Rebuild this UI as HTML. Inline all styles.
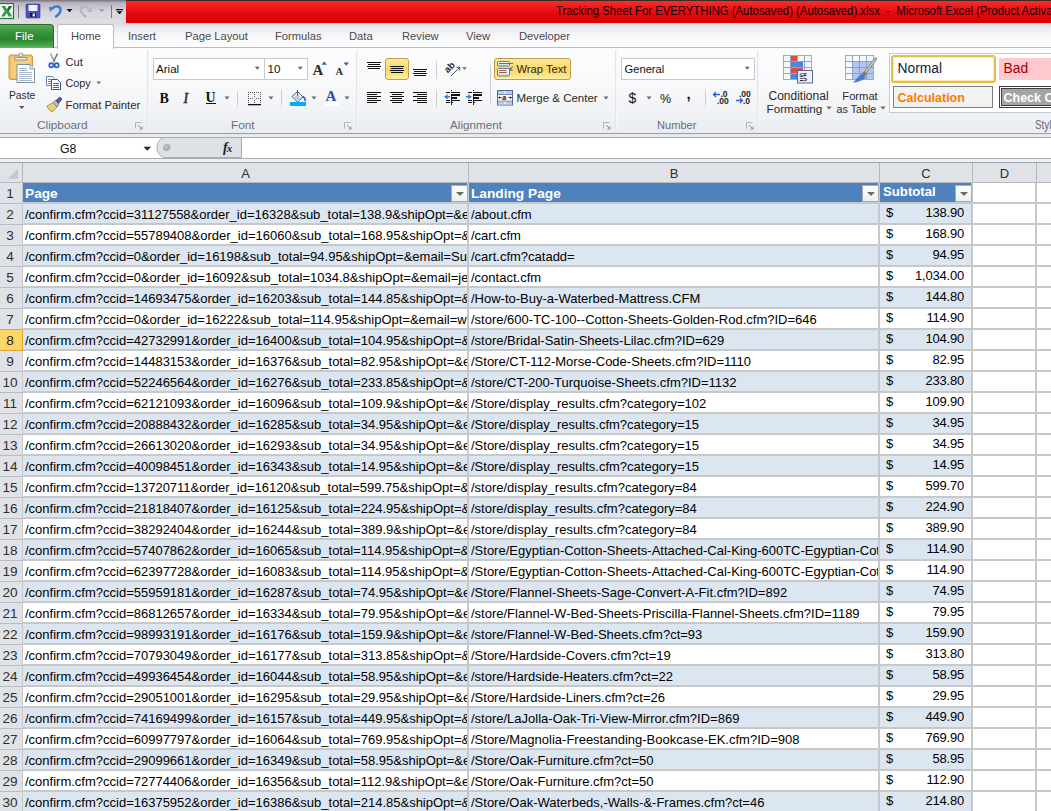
<!DOCTYPE html>
<html><head><meta charset="utf-8">
<style>
*{box-sizing:border-box;margin:0;padding:0}
html,body{width:1051px;height:811px;overflow:hidden;background:#fff;font-family:"Liberation Sans",sans-serif}
.a{position:absolute}
/* title bar */
#title{position:absolute;left:0;top:0;width:1051px;height:24px;background:linear-gradient(#77727e,#b9b5c0 12%,#d6d3dc 45%,#e2e0e6)}
#red{position:absolute;left:126px;top:1px;width:925px;height:22px;background:linear-gradient(#ff2a2a,#e00808 60%,#d80000)}
#topline{position:absolute;left:126px;top:0;width:925px;height:1px;background:#3a2a2a}
#ttext{position:absolute;left:556px;top:4px;font-size:12.4px;color:#140000;white-space:nowrap;line-height:15px;transform:scaleX(0.915);transform-origin:0 0}
/* tab row */
#tabs{position:absolute;left:0;top:23px;width:1051px;height:25px;background:linear-gradient(#d9d6e0,#eceaf1 20%,#f8f8fb 55%,#fdfdfe)}
.tab{position:absolute;top:29px;font-size:11.2px;color:#4a4a4a;line-height:14px;white-space:nowrap}
#file{position:absolute;left:0;top:24px;width:54px;height:24px;background:linear-gradient(#5aaa5a,#3a963c 30%,#2a862e 60%,#47a448 88%,#66bb66);border-radius:0 4px 0 0;border:1px solid #2a6a2c;border-left:none;border-bottom:none}
#filet{position:absolute;left:15px;top:29px;color:#fff;font-size:11.5px;line-height:14px}
#home{position:absolute;left:57px;top:24px;width:57px;height:25px;background:#fff;border:1px solid #b9bdc4;border-bottom:none;border-radius:3px 3px 0 0}
/* ribbon */
#ribbon{position:absolute;left:0;top:47px;width:1051px;height:87px;background:linear-gradient(#fdfdfe,#f6f7f9 55%,#e9ecf0);border-top:1px solid #b8bcc2}
.sep{position:absolute;top:50px;width:2px;height:80px;background:linear-gradient(90deg,#d9dce1,#ffffff)}
.glab{position:absolute;top:118px;font-size:11.5px;color:#6a6e7a;line-height:14px;white-space:nowrap}
.rt{position:absolute;font-size:11.3px;color:#2a2a2a;line-height:14px;white-space:nowrap}
#rbot{position:absolute;left:0;top:133px;width:1051px;height:1px;background:#9a9ea4}
#rbot2{position:absolute;left:0;top:134px;width:1051px;height:3px;background:#e7e9ec}
/* formula bar */
#fbar{position:absolute;left:0;top:137px;width:1051px;height:22px;background:#fff;border-top:1px solid #a9adb3;border-bottom:1px solid #a9adb3}
#fbot{position:absolute;left:0;top:159px;width:1051px;height:3px;background:#eef1f6}
/* grid */
#grid{position:absolute;left:0;top:162px;width:1051px;height:649px;background:#c8c8c8}
#colhdr{position:absolute;left:0;top:162px;width:1051px;height:21px;background:#dfe3e8;border-top:1px solid #9ea3a9;border-bottom:1px solid #b6bac0}
.ch{position:absolute;top:163px;height:19px;line-height:21px;text-align:center;font-size:13px;color:#2f2f2f;background:#dfe3e8}
.rh{position:absolute;left:0;width:22px;height:21px;line-height:21px;text-align:center;padding-right:2px;font-size:13.6px;color:#2f2f2f;background:#dfe3e8;border-bottom:1px solid #b9bdc3}
.rh.sel{background:#fdd766;color:#222;border-bottom:1px solid #e0a434;box-shadow:0 -1px 0 #e0a434, 1px 0 0 #e0a434}
.c{position:absolute;height:19px}
.w{background:#fff}
.b{background:#dce6f1}
.hdr{background:#4f81bd}
.t{position:absolute;height:21px;line-height:21px;font-size:13px;color:#000;white-space:nowrap;overflow:hidden}
.th{color:#fff;font-weight:bold;font-size:13.7px;line-height:21px}
.num{text-align:right;letter-spacing:-0.2px}
.dd{position:absolute;width:17px;height:17px;background:linear-gradient(#ffffff,#eceef1);border:1px solid #a8acb2}
.dd i{position:absolute;left:3.5px;top:6px;width:0;height:0;border-left:4.5px solid transparent;border-right:4.5px solid transparent;border-top:4.5px solid #6a6a6a}
.combo{position:absolute;height:22px;background:#fff;border:1px solid #c6cad0}
.ser{font-family:"Liberation Serif",serif;line-height:1}
.vsep{position:absolute;width:1px;background:linear-gradient(rgba(200,204,210,0),#c8ccd2 20%,#c8ccd2 80%,rgba(200,204,210,0))}
.hl{position:absolute;border:1px solid #c29b4e;border-radius:3px;background:linear-gradient(#fde89a,#fbd868 50%,#fde27e 80%,#fff2b0)}
</style></head><body>
<div id="title"></div>
<div id="topline"></div>
<div id="red"></div>
<div id="ttext">Tracking Sheet For EVERYTHING (Autosaved) (Autosaved).xlsx&nbsp; -&nbsp; Microsoft Excel (Product Activation Failed)</div>

<div id="tabs"></div>
<div id="ribbon"></div>
<div id="file"></div><div id="filet">File</div>
<div id="home"></div>
<div class="tab" style="left:71px">Home</div>
<div class="tab" style="left:128px">Insert</div>
<div class="tab" style="left:185px">Page Layout</div>
<div class="tab" style="left:275px">Formulas</div>
<div class="tab" style="left:349px">Data</div>
<div class="tab" style="left:402px">Review</div>
<div class="tab" style="left:466px">View</div>
<div class="tab" style="left:519px">Developer</div>

<!-- quick access toolbar -->
<svg class="a" style="left:0;top:0" width="126" height="24" viewBox="0 0 126 24">
  <!-- excel icon -->
  <rect x="-1" y="3.5" width="14.5" height="15" fill="#f4f8f4" stroke="#1f7a3a" stroke-width="1.2"/>
  <path d="M1.5 6 L5 6 L7 9.5 L9 6 L12 6 L8.8 11 L12.2 16.5 L8.6 16.5 L6.6 13 L4.5 16.5 L1.2 16.5 L4.8 11 Z" fill="#2e9a3e"/>
  <path d="M7 9.5 L9 6 L12 6 L8.8 11 Z" fill="#1c6e30"/>
  <rect x="18" y="5" width="1" height="13" fill="#7c7a80"/>
  <!-- save -->
  <rect x="26" y="4" width="14" height="14" rx="1" fill="#4d4fc2" stroke="#3a3aa0" stroke-width="0.6"/>
  <rect x="28.5" y="5" width="9" height="6" fill="#eef0f8"/>
  <rect x="30" y="13" width="6" height="4" fill="#1b1b3a"/>
  <rect x="32.5" y="13.5" width="2.5" height="3" fill="#d8d8e8"/>
  <!-- undo -->
  <path d="M52 8.5 C 56 5, 61 6, 60.5 10.5 C 60 14, 57.5 15.5, 56 16.5" fill="none" stroke="#3a7ad8" stroke-width="2.4" stroke-linecap="round"/>
  <path d="M49 7 L54.5 7 L50 12 Z" fill="#3a7ad8"/>
  <path d="M66.5 9 L72.5 9 L69.5 12.2 Z" fill="#111"/>
  <!-- redo -->
  <path d="M89 8.5 C 85 5, 80.5 6, 81 10.5 C 81.5 14, 84 15.5, 85.5 16.5" fill="none" stroke="#b8b8bc" stroke-width="2.4" stroke-linecap="round"/>
  <path d="M92 7.5 L92 12 L86.5 12 Z" fill="#b8b8bc"/>
  <path d="M99 9.2 L104.5 9.2 L101.7 12 Z" fill="#9a9a9e"/>
  <rect x="111" y="5" width="1" height="13" fill="#7c7a80"/>
  <rect x="116" y="9" width="7" height="1.3" fill="#111"/>
  <path d="M116.5 11.2 L122.5 11.2 L119.5 14.2 Z" fill="#111"/>
</svg>

<!-- group separators -->
<div class="sep" style="left:147px"></div>
<div class="sep" style="left:356px"></div>
<div class="sep" style="left:615px"></div>
<div class="sep" style="left:757px"></div>

<!-- Clipboard group -->
<svg class="a" style="left:6px;top:51px" width="32" height="34" viewBox="0 0 32 34">
  <rect x="3" y="4" width="23.5" height="24.5" rx="2" fill="#f3c161" stroke="#c8984a" stroke-width="1"/>
  <rect x="5" y="6" width="19.5" height="20.5" rx="1" fill="#f7cd78"/>
  <path d="M8.5 6.5 L21 6.5 L21 9 L8.5 9 Z" fill="#e8ecf0" stroke="#7a8896" stroke-width="0.8"/>
  <circle cx="14.8" cy="4" r="2" fill="#e8ecf0" stroke="#7a8896" stroke-width="0.8"/>
  <path d="M11 13.5 L24 13.5 L28.5 18 L28.5 31.5 L11 31.5 Z" fill="#fdfdfd" stroke="#7c8fa3" stroke-width="1"/>
  <path d="M24 13.5 L24 18 L28.5 18" fill="#e2e8ee" stroke="#7c8fa3" stroke-width="0.8"/>
  <g fill="#a9b8c8" shape-rendering="crispEdges"><rect x="13" y="17" width="8" height="1"/><rect x="13" y="19" width="8" height="1"/><rect x="13" y="21" width="13" height="1"/><rect x="13" y="23" width="13" height="1"/><rect x="13" y="25" width="13" height="1"/><rect x="13" y="27" width="13" height="1"/><rect x="13" y="29" width="13" height="1"/></g>
</svg>
<div class="rt" style="left:9px;top:89.1px;font-size:10.3px">Paste</div>
<svg class="a" style="left:18px;top:105px" width="8" height="5"><path d="M1 1 L6.5 1 L3.75 4 Z" fill="#555"/></svg>

<svg class="a" style="left:47px;top:53px" width="14" height="16" viewBox="0 0 14 16">
  <path d="M3.5 0.5 L7.5 9" stroke="#9a9ca2" stroke-width="1.5"/>
  <path d="M10.5 0.5 L6.5 9" stroke="#6d7077" stroke-width="1.5"/>
  <circle cx="4.3" cy="12.3" r="2.1" fill="#dfe8f8" stroke="#2f5fc8" stroke-width="1.7"/>
  <circle cx="9.7" cy="12.3" r="2.1" fill="#dfe8f8" stroke="#2f5fc8" stroke-width="1.7"/>
</svg>
<div class="rt" style="left:65.5px;top:55.3px;font-size:11.1px">Cut</div>

<svg class="a" style="left:45px;top:75px" width="17" height="15" viewBox="0 0 17 15">
  <path d="M1.5 1.5 L7.5 1.5 L9.5 3.5 L9.5 10.5 L1.5 10.5 Z" fill="#fafcff" stroke="#6a84ac" stroke-width="1"/>
  <g fill="#5a8ad8" shape-rendering="crispEdges"><rect x="3" y="4" width="5" height="1"/><rect x="3" y="6" width="5" height="1"/><rect x="3" y="8" width="4" height="1"/></g>
  <path d="M6.5 4.5 L12.5 4.5 L15.5 7.5 L15.5 14.5 L6.5 14.5 Z" fill="#fafcff" stroke="#34549a" stroke-width="1"/>
  <g fill="#2f6ad0" shape-rendering="crispEdges"><rect x="8" y="8" width="6" height="1"/><rect x="8" y="10" width="6" height="1"/><rect x="8" y="12" width="6" height="1"/></g>
</svg>
<div class="rt" style="left:65.5px;top:76px;font-size:10.8px">Copy</div>
<svg class="a" style="left:96px;top:81px" width="6" height="4"><path d="M0.5 0.5 L5 0.5 L2.75 3.2 Z" fill="#666"/></svg>

<svg class="a" style="left:45px;top:96px" width="18" height="17" viewBox="0 0 18 17">
  <path d="M2 10 L8.5 6.5 L12 11 L7.5 16 C 5 15, 3 13, 2 10 Z" fill="#e8d270" stroke="#a08a30" stroke-width="0.8"/>
  <path d="M8 6.5 L11 4 L14 8 L12 11 Z" fill="#b8bcc8" stroke="#6a6e80" stroke-width="0.7"/>
  <path d="M11 4.5 L15 1 L17 3 L13.5 7.5 Z" fill="#5b4fc0" stroke="#3a2f90" stroke-width="0.7"/>
</svg>
<div class="rt" style="left:65.5px;top:98.3px;font-size:11.3px">Format Painter</div>

<div class="glab" style="left:37px;top:118px;font-size:11.8px">Clipboard</div>
<svg class="a launch" style="left:135px;top:122px" width="8" height="8" viewBox="0 0 8 8"><path d="M0.5 6.5 L0.5 0.5 L6.5 0.5" fill="none" stroke="#b0b4bc" stroke-width="1"/><path d="M3 3 L6.5 6.5 M7 4.5 L7 7 L4.5 7" fill="none" stroke="#8a8e98" stroke-width="1"/></svg>

<!-- Font group -->
<div class="combo" style="left:153px;top:58px;width:112px"></div>
<div class="combo" style="left:264px;top:58px;width:44px"></div>
<div class="rt" style="left:156px;top:62px;font-size:11.6px;color:#111">Arial</div>
<div class="rt" style="left:267.5px;top:62px;font-size:11.6px;color:#111">10</div>
<svg class="a" style="left:254px;top:66px" width="7" height="5"><path d="M0.8 0.8 L5.8 0.8 L3.3 3.8 Z" fill="#666"/></svg>
<svg class="a" style="left:297px;top:66px" width="7" height="5"><path d="M0.8 0.8 L5.8 0.8 L3.3 3.8 Z" fill="#666"/></svg>
<div class="a ser" style="left:312.5px;top:63px;font-size:15px;font-weight:bold;color:#2b2b2b">A</div>
<svg class="a" style="left:321px;top:61px" width="7" height="5"><path d="M0.5 3.8 L6 3.8 L3.25 0.5 Z" fill="#2f5fb8"/></svg>
<div class="a ser" style="left:335.5px;top:66.5px;font-size:10.5px;font-weight:bold;color:#2b2b2b">A</div>
<svg class="a" style="left:342.5px;top:62px" width="7" height="5"><path d="M0.5 0.5 L6 0.5 L3.25 3.8 Z" fill="#2f5fb8"/></svg>

<div class="a ser" style="left:159.5px;top:91.5px;font-size:14px;font-weight:bold;color:#111">B</div>
<div class="a ser" style="left:183.5px;top:91.5px;font-size:14px;font-style:italic;color:#222;-webkit-text-stroke:0.4px #222">I</div>
<div class="a ser" style="left:205.5px;top:91px;font-size:14px;font-weight:bold;color:#111">U</div>
<div class="a" style="left:206px;top:103px;width:10px;height:1px;background:#111"></div>
<svg class="a" style="left:224px;top:95.5px" width="7" height="5"><path d="M0.5 0.5 L5.5 0.5 L3 3.5 Z" fill="#666"/></svg>
<div class="vsep" style="left:237px;top:89px;height:19px"></div>
<svg class="a" style="left:247px;top:91px" width="15" height="15" viewBox="0 0 15 15">
  <g fill="#555"><rect x="1" y="1" width="1" height="1"/><rect x="3" y="1" width="1" height="1"/><rect x="5" y="1" width="1" height="1"/><rect x="7" y="1" width="1" height="1"/><rect x="9" y="1" width="1" height="1"/><rect x="11" y="1" width="1" height="1"/><rect x="13" y="1" width="1" height="1"/>
  <rect x="1" y="3" width="1" height="1"/><rect x="1" y="5" width="1" height="1"/><rect x="1" y="7" width="1" height="1"/><rect x="1" y="9" width="1" height="1"/><rect x="1" y="11" width="1" height="1"/>
  <rect x="13" y="3" width="1" height="1"/><rect x="13" y="5" width="1" height="1"/><rect x="13" y="7" width="1" height="1"/><rect x="13" y="9" width="1" height="1"/><rect x="13" y="11" width="1" height="1"/>
  <rect x="7" y="3" width="1" height="1"/><rect x="7" y="5" width="1" height="1"/><rect x="7" y="9" width="1" height="1"/><rect x="7" y="11" width="1" height="1"/>
  <rect x="3" y="7" width="1" height="1"/><rect x="5" y="7" width="1" height="1"/><rect x="9" y="7" width="1" height="1"/><rect x="11" y="7" width="1" height="1"/></g>
  <rect x="1" y="13" width="13" height="1.3" fill="#111"/>
</svg>
<svg class="a" style="left:268px;top:95.5px" width="7" height="5"><path d="M0.5 0.5 L5.5 0.5 L3 3.5 Z" fill="#666"/></svg>
<div class="vsep" style="left:281px;top:88px;height:20px"></div>
<svg class="a" style="left:289px;top:89px" width="18" height="18" viewBox="0 0 18 18">
  <path d="M3 7.5 L8.5 2.5 L14 8 L8.5 13 Z" fill="#f4f6fa" stroke="#4b5a78" stroke-width="1"/>
  <path d="M5 8.5 L8.5 5.5 L12 8.5 L8.5 11.5 Z" fill="#b8cce8"/>
  <path d="M13.5 7.5 C 16 9, 17 10.5, 15.5 12" fill="none" stroke="#2f5fc8" stroke-width="1.6"/>
  <line x1="8.5" y1="1" x2="8.5" y2="7" stroke="#4b5a78" stroke-width="1"/>
  <rect x="1" y="13" width="16" height="4" fill="#00b0f0"/>
</svg>
<svg class="a" style="left:311px;top:95.5px" width="7" height="5"><path d="M0.5 0.5 L5.5 0.5 L3 3.5 Z" fill="#666"/></svg>
<div class="a ser" style="left:325.5px;top:88.5px;font-size:15px;font-weight:bold;color:#2a4e9e">A</div><div class="a" style="left:325px;top:102px;width:14px;height:4px;background:#fff"></div>
<svg class="a" style="left:344px;top:95.5px" width="7" height="5"><path d="M0.5 0.5 L5.5 0.5 L3 3.5 Z" fill="#666"/></svg>
<div class="glab" style="left:231px;top:118px;font-size:11.8px">Font</div>
<svg class="a" style="left:344px;top:122px" width="8" height="8" viewBox="0 0 8 8"><path d="M0.5 6.5 L0.5 0.5 L6.5 0.5" fill="none" stroke="#b0b4bc" stroke-width="1"/><path d="M3 3 L6.5 6.5 M7 4.5 L7 7 L4.5 7" fill="none" stroke="#8a8e98" stroke-width="1"/></svg>

<!-- Alignment group -->
<div class="hl" style="left:385px;top:58px;width:24px;height:22px"></div>
<div class="hl" style="left:494px;top:58px;width:77px;height:22px"></div>
<svg class="a" style="left:360px;top:56px" width="130" height="56" viewBox="0 0 130 56" shape-rendering="crispEdges"><g fill="#111"><rect x="7" y="6" width="14" height="1"/><rect x="8" y="8" width="12" height="1"/><rect x="7" y="10" width="14" height="1"/><rect x="8" y="12" width="12" height="1"/><rect x="30" y="10" width="14" height="1"/><rect x="31" y="12" width="12" height="1"/><rect x="30" y="14" width="14" height="1"/><rect x="31" y="16" width="12" height="1"/><rect x="53" y="13" width="14" height="1"/><rect x="54" y="15" width="12" height="1"/><rect x="53" y="17" width="14" height="1"/><rect x="54" y="19" width="12" height="1"/><rect x="7" y="36" width="14" height="1"/><rect x="30" y="36" width="14" height="1"/><rect x="53" y="36" width="14" height="1"/><rect x="7" y="38" width="10" height="1"/><rect x="32" y="38" width="10" height="1"/><rect x="57" y="38" width="10" height="1"/><rect x="7" y="40" width="14" height="1"/><rect x="30" y="40" width="14" height="1"/><rect x="53" y="40" width="14" height="1"/><rect x="7" y="42" width="10" height="1"/><rect x="32" y="42" width="10" height="1"/><rect x="57" y="42" width="10" height="1"/><rect x="7" y="44" width="14" height="1"/><rect x="30" y="44" width="14" height="1"/><rect x="53" y="44" width="14" height="1"/><rect x="7" y="46" width="10" height="1"/><rect x="32" y="46" width="10" height="1"/><rect x="57" y="46" width="10" height="1"/><rect x="91" y="36" width="9" height="1"/><rect x="91" y="38" width="9" height="2"/><rect x="91" y="41" width="6" height="2"/><rect x="91" y="44" width="9" height="1"/><rect x="91" y="46" width="2" height="1"/><rect x="86" y="36" width="4" height="1"/><rect x="86" y="44" width="4" height="1"/><rect x="86" y="46" width="4" height="1"/><rect x="91" y="34" width="1" height="1"/><rect x="91" y="48" width="1" height="1"/><rect x="113" y="36" width="9" height="1"/><rect x="113" y="38" width="9" height="2"/><rect x="113" y="41" width="6" height="2"/><rect x="113" y="44" width="9" height="1"/><rect x="113" y="46" width="2" height="1"/><rect x="108" y="36" width="4" height="1"/><rect x="108" y="44" width="4" height="1"/><rect x="108" y="46" width="4" height="1"/><rect x="113" y="34" width="1" height="1"/><rect x="113" y="48" width="1" height="1"/></g><g fill="#333"><rect x="91" y="40" width="1" height="1"/><rect x="91" y="43" width="1" height="1"/><rect x="91" y="45" width="1" height="1"/><rect x="91" y="47" width="1" height="1"/><rect x="113" y="40" width="1" height="1"/><rect x="113" y="43" width="1" height="1"/><rect x="113" y="45" width="1" height="1"/><rect x="113" y="47" width="1" height="1"/></g><g shape-rendering="geometricPrecision"><path d="M84 40.7 L88 38 L87.5 40 L90 40 L90 41.5 L87.5 41.5 L88 43.5 Z" fill="#3a78d8"/><path d="M112 40.7 L108 38 L108.5 40 L106 40 L106 41.5 L108.5 41.5 L108 43.5 Z" fill="#3a78d8"/><g transform="translate(89,11) rotate(-45)"><text x="-5.5" y="3.8" font-family="Liberation Sans" font-weight="bold" font-size="9.5" fill="#2a2a2a">ab</text></g><path d="M91 20 L99.5 11.5" stroke="#333" stroke-width="0.9"/><path d="M96.5 11.299999999999997 L99.80000000000001 11.200000000000003 L99.69999999999999 14.5" fill="none" stroke="#333" stroke-width="0.9"/><path d="M102 11.200000000000003 L107 11.200000000000003 L104.5 14 Z" fill="#777"/></g></svg>
<div class="vsep" style="left:435.5px;top:59px;height:21px"></div>
<div class="vsep" style="left:435.5px;top:88px;height:21px"></div>
<div class="vsep" style="left:489.5px;top:59px;height:50px"></div>
<svg class="a" style="left:496px;top:60px" width="18" height="17" viewBox="0 0 18 17">
  <defs><linearGradient id="wg" x1="0" y1="0" x2="0" y2="1"><stop offset="0" stop-color="#ffffff"/><stop offset="1" stop-color="#c8d6ec"/></linearGradient></defs>
  <rect x="1.5" y="1.5" width="12" height="4.5" rx="0.8" fill="url(#wg)" stroke="#5a70a0" stroke-width="0.9"/>
  <rect x="1.5" y="8.5" width="12" height="7.5" rx="0.8" fill="url(#wg)" stroke="#5a70a0" stroke-width="0.9"/>
  <rect x="3" y="3" width="14" height="1" fill="#a0602a"/>
  <rect x="3" y="10" width="7.5" height="1" fill="#a0602a"/>
  <rect x="3" y="12" width="7.5" height="1" fill="#a0602a"/>
  <path d="M16.5 6.5 L14.5 9.8 M14 7.5 L14 10.2 L16.5 10.2" fill="none" stroke="#2f62c0" stroke-width="1"/>
</svg>
<div class="rt" style="left:516.5px;top:62px;font-size:11.2px">Wrap Text</div>
<svg class="a" style="left:496px;top:89px" width="18" height="17" viewBox="0 0 18 17">
  <rect x="1.5" y="1.5" width="15" height="14.5" fill="#fff" stroke="#4f6a9c" stroke-width="1"/>
  <g fill="#b8cbea"><rect x="2" y="2" width="6.5" height="3"/><rect x="9.5" y="2" width="6.5" height="3"/><rect x="2" y="12.5" width="6.5" height="3"/><rect x="9.5" y="12.5" width="6.5" height="3"/></g>
  <g fill="#5a70a0"><rect x="2" y="5" width="14" height="0.8"/><rect x="2" y="11.7" width="14" height="0.8"/></g>
  <text x="6" y="11" font-family="Liberation Serif" font-weight="bold" font-size="8.5" fill="#222">a</text>
  <path d="M2.5 8.6 L5.5 8.6 M12.5 8.6 L15.5 8.6" stroke="#222" stroke-width="1"/>
  <path d="M2.3 8.6 L4 7.2 L4 10 Z M15.7 8.6 L14 7.2 L14 10 Z" fill="#222"/>
</svg>
<div class="rt" style="left:516.5px;top:91px;font-size:11.5px">Merge &amp; Center</div>
<svg class="a" style="left:602.5px;top:95.5px" width="7" height="5"><path d="M0.5 0.5 L5.5 0.5 L3 3.5 Z" fill="#666"/></svg>
<div class="glab" style="left:450px;top:118px;font-size:11.7px">Alignment</div>
<svg class="a" style="left:603px;top:122px" width="8" height="8" viewBox="0 0 8 8"><path d="M0.5 6.5 L0.5 0.5 L6.5 0.5" fill="none" stroke="#b0b4bc" stroke-width="1"/><path d="M3 3 L6.5 6.5 M7 4.5 L7 7 L4.5 7" fill="none" stroke="#8a8e98" stroke-width="1"/></svg>

<!-- Number group -->
<div class="combo" style="left:621px;top:58px;width:134px"></div>
<div class="rt" style="left:624.5px;top:62.2px;font-size:11.2px;color:#111">General</div>
<svg class="a" style="left:744px;top:66px" width="7" height="5"><path d="M0.8 0.8 L5.8 0.8 L3.3 3.8 Z" fill="#666"/></svg>
<div class="a" style="left:628.5px;top:90.5px;font-size:14px;color:#111;line-height:14px;">$</div>
<svg class="a" style="left:645.5px;top:95.5px" width="7" height="5"><path d="M0.5 0.5 L5.5 0.5 L3 3.5 Z" fill="#666"/></svg>
<div class="a" style="left:660px;top:91.5px;font-size:12.5px;color:#111;line-height:14px">%</div>
<div class="a" style="left:686.5px;top:87px;font-size:15px;font-weight:bold;color:#111;line-height:14px">,</div>
<div class="vsep" style="left:705px;top:88px;height:20px"></div>
<svg class="a" style="left:712px;top:90px" width="42" height="15" viewBox="0 0 42 15">
  <text x="8.5" y="7" font-family="Liberation Sans" font-weight="bold" font-size="8.5" fill="#222">.0</text>
  <text x="5" y="13.5" font-family="Liberation Sans" font-weight="bold" font-size="8.5" fill="#222">.00</text>
  <path d="M1.5 4.5 L8 4.5 M4 2 L1.5 4.5 L4 7" fill="none" stroke="#2f5fc8" stroke-width="1.3"/>
  <text x="27" y="7" font-family="Liberation Sans" font-weight="bold" font-size="8.5" fill="#222">.00</text>
  <text x="31" y="13.5" font-family="Liberation Sans" font-weight="bold" font-size="8.5" fill="#222">.0</text>
  <path d="M24 10.5 L30.5 10.5 M28 8 L30.5 10.5 L28 13" fill="none" stroke="#2f5fc8" stroke-width="1.3"/>
</svg>
<div class="glab" style="left:657px;top:118px;font-size:11.1px">Number</div>
<svg class="a" style="left:746px;top:122px" width="8" height="8" viewBox="0 0 8 8"><path d="M0.5 6.5 L0.5 0.5 L6.5 0.5" fill="none" stroke="#b0b4bc" stroke-width="1"/><path d="M3 3 L6.5 6.5 M7 4.5 L7 7 L4.5 7" fill="none" stroke="#8a8e98" stroke-width="1"/></svg>

<!-- Styles group -->
<svg class="a" style="left:782px;top:54px" width="32" height="30" viewBox="0 0 32 30">
  <g fill="#f6f8fc" stroke="#8a9ab8" stroke-width="0.8">
    <rect x="1.5" y="1.5" width="7" height="6"/><rect x="8.5" y="1.5" width="7" height="6"/><rect x="15.5" y="1.5" width="7" height="6"/><rect x="22.5" y="1.5" width="7" height="6"/>
    <rect x="1.5" y="7.5" width="7" height="6"/><rect x="8.5" y="7.5" width="7" height="6"/><rect x="15.5" y="7.5" width="7" height="6"/><rect x="22.5" y="7.5" width="7" height="6"/>
    <rect x="1.5" y="13.5" width="7" height="6"/><rect x="8.5" y="13.5" width="7" height="6"/><rect x="15.5" y="13.5" width="7" height="6"/><rect x="22.5" y="13.5" width="7" height="6"/>
    <rect x="1.5" y="19.5" width="7" height="6"/><rect x="8.5" y="19.5" width="7" height="6"/><rect x="15.5" y="19.5" width="7" height="6"/><rect x="22.5" y="19.5" width="7" height="6"/>
  </g>
  <rect x="9" y="2" width="6" height="5" fill="#e8493a"/>
  <rect x="9" y="8" width="12" height="5" fill="#4a86e0"/>
  <rect x="9" y="14" width="12" height="5" fill="#e8493a"/>
  <rect x="9" y="20" width="6" height="5" fill="#4a86e0"/>
  <rect x="15.5" y="16.5" width="15" height="12.5" fill="#eef2f8" stroke="#4a5a78" stroke-width="0.9"/>
  <text x="17.5" y="22.5" font-family="Liberation Sans" font-size="6.5" font-weight="bold" fill="#222">≤≠</text>
  <text x="17.5" y="28" font-family="Liberation Sans" font-size="6.5" font-weight="bold" fill="#222">=&gt;</text>
</svg>
<div class="rt" style="left:768.5px;top:88.7px;font-size:12px">Conditional</div>
<div class="rt" style="left:766.5px;top:101.9px;font-size:11.7px">Formatting</div>
<svg class="a" style="left:825.5px;top:106px" width="7" height="5"><path d="M0.5 0.5 L5.5 0.5 L3 3.5 Z" fill="#666"/></svg>

<svg class="a" style="left:844px;top:54px" width="33" height="30" viewBox="0 0 33 30">
  <g fill="#f6f8fc" stroke="#8a9ab8" stroke-width="0.8">
    <rect x="1.5" y="1.5" width="7" height="6"/><rect x="8.5" y="1.5" width="7" height="6"/><rect x="15.5" y="1.5" width="7" height="6"/><rect x="22.5" y="1.5" width="7" height="6"/>
    <rect x="1.5" y="7.5" width="7" height="6"/><rect x="1.5" y="13.5" width="7" height="6"/><rect x="1.5" y="19.5" width="7" height="6"/>
  </g>
  <g fill="#b0c8f0" stroke="#8a9ab8" stroke-width="0.8">
    <rect x="8.5" y="7.5" width="7" height="6"/><rect x="15.5" y="7.5" width="7" height="6"/><rect x="22.5" y="7.5" width="7" height="6"/>
    <rect x="8.5" y="13.5" width="7" height="6"/><rect x="15.5" y="13.5" width="7" height="6"/><rect x="22.5" y="13.5" width="7" height="6"/>
    <rect x="8.5" y="19.5" width="7" height="6"/><rect x="15.5" y="19.5" width="7" height="6"/><rect x="22.5" y="19.5" width="7" height="6"/>
  </g>
  <path d="M31.5 5 L20 20" stroke="#8a8a8a" stroke-width="3" stroke-linecap="round"/>
  <path d="M31.5 5 L20 20" stroke="#d8d8d8" stroke-width="1.2"/>
  <path d="M17.5 19.5 L20.5 17 L23 20 L19 24 Z" fill="#9a7a48"/>
  <path d="M18 20 L22 23.5 C 18 27, 13 28.5, 9 28.5 C 12 26, 14 22, 18 20 Z" fill="#4a7ad8"/>
</svg>
<div class="rt" style="left:842.3px;top:89.4px;font-size:11.2px">Format</div>
<div class="rt" style="left:836.6px;top:101.9px;font-size:10.7px">as Table</div>
<svg class="a" style="left:879.5px;top:106px" width="7" height="5"><path d="M0.5 0.5 L5.5 0.5 L3 3.5 Z" fill="#666"/></svg>

<div class="a" style="left:889px;top:53px;width:170px;height:60px;background:#fff;border:1px solid #c5c9d0"></div>
<div class="a" style="left:890.5px;top:55px;width:105.5px;height:28px;background:#fff;border:2px solid #e8bd50;border-radius:3px;box-shadow:inset 0 0 0 1px #fbe9a8"></div>
<div class="a" style="left:897.5px;top:62px;font-size:13.8px;line-height:14px;color:#0c1a38">Normal</div>
<div class="a" style="left:999px;top:58px;width:60px;height:22px;background:#ffc7ce"></div>
<div class="a" style="left:1003.5px;top:62px;font-size:13.8px;line-height:14px;color:#9c0006">Bad</div>
<div class="a" style="left:893px;top:86px;width:100px;height:22px;background:#f2f2f2;border:1px solid #7f7f7f"></div>
<div class="a" style="left:897.5px;top:91px;font-size:12.5px;line-height:14px;color:#fa7d00;font-weight:bold">Calculation</div>
<div class="a" style="left:999px;top:86px;width:60px;height:22px;background:#a5a5a5;border:1px solid #3f3f3f;box-shadow:inset 0 0 0 1px #fff, inset 0 0 0 2px #3f3f3f"></div>
<div class="a" style="left:1003.5px;top:91px;font-size:12.5px;line-height:14px;color:#fff;font-weight:bold;white-space:nowrap">Check Cell</div>
<div class="glab" style="left:1034.5px;top:118px;font-size:12px;transform:scaleX(0.82);transform-origin:0 0">Styles</div>


<div id="rbot"></div><div id="rbot2"></div>
<div id="fbar"></div><div id="fbot"></div>
<div class="a" style="left:60px;top:143.3px;font-size:12.3px;line-height:1;color:#111">G8</div>
<svg class="a" style="left:143px;top:146px" width="9" height="6"><path d="M0.5 0.8 L8 0.8 L4.25 4.8 Z" fill="#222"/></svg>
<svg class="a" style="left:156px;top:137px" width="88" height="22" viewBox="0 0 88 22">
  <path d="M86 0.5 L9.5 0.5 C 4.5 0.5, 1 5, 1 10.5 C 1 16, 4.5 20.5, 9.5 20.5 L86 20.5" fill="#dee1e6" stroke="#a9adb3" stroke-width="1"/>
  <line x1="85.5" y1="0.5" x2="85.5" y2="21" stroke="#a9adb3" stroke-width="1"/>
  <defs><radialGradient id="gr" cx="0.4" cy="0.35" r="0.7"><stop offset="0" stop-color="#c8c8cc"/><stop offset="0.6" stop-color="#a8aab0"/><stop offset="1" stop-color="#e8e8ea"/></radialGradient></defs>
  <circle cx="11" cy="11" r="4" fill="url(#gr)"/>
</svg>
<div class="a ser" style="left:223px;top:140.5px;font-size:14px;font-style:italic;font-weight:bold;color:#222;letter-spacing:-1px">f<span style="font-size:11px">x</span></div>


<div id="grid"></div>
<div id="colhdr"></div>
<div class="ch" style="left:0;width:22px"><svg style="position:absolute;left:7px;top:5px" width="12" height="12"><path d="M11 0.5 L11 11 L0.5 11 Z" fill="#c5c9ce"/></svg></div>
<div class="ch" style="left:23px;width:445px">A</div>
<div class="ch" style="left:469px;width:410px">B</div>
<div class="ch" style="left:880px;width:92px">C</div>
<div class="ch" style="left:973px;width:63px">D</div>
<div class="ch" style="left:1037px;width:14px"></div>
<div class="a" style="left:22px;top:163px;width:1px;height:19px;background:#b4b8be"></div><div class="a" style="left:468px;top:163px;width:1px;height:19px;background:#b4b8be"></div><div class="a" style="left:879px;top:163px;width:1px;height:19px;background:#b4b8be"></div><div class="a" style="left:972px;top:163px;width:1px;height:19px;background:#b4b8be"></div><div class="a" style="left:1036px;top:163px;width:1px;height:19px;background:#b4b8be"></div>
<div class="rh" style="top:183px">1</div>
<div class="c hdr" style="left:23px;top:183px;width:444px"></div>
<div class="c hdr" style="left:469px;top:183px;width:409px"></div>
<div class="c hdr" style="left:880px;top:183px;width:91px"></div>
<div class="c w" style="left:973px;top:183px;width:62px"></div>
<div class="c w" style="left:1037px;top:183px;width:14px"></div>
<div class="t th" style="left:25px;top:183px;width:420px">Page</div>
<div class="t th" style="left:471px;top:183px;width:380px">Landing Page</div>
<div class="t th" style="left:883px;top:181px;width:70px;font-size:13.2px">Subtotal</div>
<div class="dd" style="left:451px;top:185px"><i></i></div>
<div class="dd" style="left:862px;top:185px"><i></i></div>
<div class="dd" style="left:955px;top:185px"><i></i></div>
<div class="rh" style="top:204px">2</div>
<div class="c b" style="left:23px;top:204px;width:444px"></div>
<div class="c b" style="left:469px;top:204px;width:409px"></div>
<div class="c b" style="left:880px;top:204px;width:91px"></div>
<div class="c w" style="left:973px;top:204px;width:62px"></div>
<div class="c w" style="left:1037px;top:204px;width:14px"></div>
<div class="t" style="left:25px;top:204px;width:442px">/confirm.cfm?ccid=31127558&amp;order_id=16328&amp;sub_total=138.9&amp;shipOpt=&amp;email=</div>
<div class="t" style="left:471px;top:204px;width:407px">/about.cfm</div>
<div class="t" style="left:886px;top:202px;width:12px">$</div>
<div class="t num" style="left:901px;top:202px;width:63px">138.90</div>
<div class="rh" style="top:225px">3</div>
<div class="c w" style="left:23px;top:225px;width:444px"></div>
<div class="c w" style="left:469px;top:225px;width:409px"></div>
<div class="c w" style="left:880px;top:225px;width:91px"></div>
<div class="c w" style="left:973px;top:225px;width:62px"></div>
<div class="c w" style="left:1037px;top:225px;width:14px"></div>
<div class="t" style="left:25px;top:225px;width:442px">/confirm.cfm?ccid=55789408&amp;order_id=16060&amp;sub_total=168.95&amp;shipOpt=&amp;email=</div>
<div class="t" style="left:471px;top:225px;width:407px">/cart.cfm</div>
<div class="t" style="left:886px;top:223px;width:12px">$</div>
<div class="t num" style="left:901px;top:223px;width:63px">168.90</div>
<div class="rh" style="top:246px">4</div>
<div class="c b" style="left:23px;top:246px;width:444px"></div>
<div class="c b" style="left:469px;top:246px;width:409px"></div>
<div class="c b" style="left:880px;top:246px;width:91px"></div>
<div class="c w" style="left:973px;top:246px;width:62px"></div>
<div class="c w" style="left:1037px;top:246px;width:14px"></div>
<div class="t" style="left:25px;top:246px;width:442px">/confirm.cfm?ccid=0&amp;order_id=16198&amp;sub_total=94.95&amp;shipOpt=&amp;email=Sue</div>
<div class="t" style="left:471px;top:246px;width:407px">/cart.cfm?catadd=</div>
<div class="t" style="left:886px;top:244px;width:12px">$</div>
<div class="t num" style="left:901px;top:244px;width:63px">94.95</div>
<div class="rh" style="top:267px">5</div>
<div class="c w" style="left:23px;top:267px;width:444px"></div>
<div class="c w" style="left:469px;top:267px;width:409px"></div>
<div class="c w" style="left:880px;top:267px;width:91px"></div>
<div class="c w" style="left:973px;top:267px;width:62px"></div>
<div class="c w" style="left:1037px;top:267px;width:14px"></div>
<div class="t" style="left:25px;top:267px;width:442px">/confirm.cfm?ccid=0&amp;order_id=16092&amp;sub_total=1034.8&amp;shipOpt=&amp;email=jeff</div>
<div class="t" style="left:471px;top:267px;width:407px">/contact.cfm</div>
<div class="t" style="left:886px;top:265px;width:12px">$</div>
<div class="t num" style="left:901px;top:265px;width:63px">1,034.00</div>
<div class="rh" style="top:288px">6</div>
<div class="c b" style="left:23px;top:288px;width:444px"></div>
<div class="c b" style="left:469px;top:288px;width:409px"></div>
<div class="c b" style="left:880px;top:288px;width:91px"></div>
<div class="c w" style="left:973px;top:288px;width:62px"></div>
<div class="c w" style="left:1037px;top:288px;width:14px"></div>
<div class="t" style="left:25px;top:288px;width:442px">/confirm.cfm?ccid=14693475&amp;order_id=16203&amp;sub_total=144.85&amp;shipOpt=&amp;email=</div>
<div class="t" style="left:471px;top:288px;width:407px">/How-to-Buy-a-Waterbed-Mattress.CFM</div>
<div class="t" style="left:886px;top:286px;width:12px">$</div>
<div class="t num" style="left:901px;top:286px;width:63px">144.80</div>
<div class="rh" style="top:309px">7</div>
<div class="c w" style="left:23px;top:309px;width:444px"></div>
<div class="c w" style="left:469px;top:309px;width:409px"></div>
<div class="c w" style="left:880px;top:309px;width:91px"></div>
<div class="c w" style="left:973px;top:309px;width:62px"></div>
<div class="c w" style="left:1037px;top:309px;width:14px"></div>
<div class="t" style="left:25px;top:309px;width:442px">/confirm.cfm?ccid=0&amp;order_id=16222&amp;sub_total=114.95&amp;shipOpt=&amp;email=will</div>
<div class="t" style="left:471px;top:309px;width:407px">/store/600-TC-100--Cotton-Sheets-Golden-Rod.cfm?ID=646</div>
<div class="t" style="left:886px;top:307px;width:12px">$</div>
<div class="t num" style="left:901px;top:307px;width:63px">114.90</div>
<div class="rh sel" style="top:330px">8</div>
<div class="c b" style="left:23px;top:330px;width:444px"></div>
<div class="c b" style="left:469px;top:330px;width:409px"></div>
<div class="c b" style="left:880px;top:330px;width:91px"></div>
<div class="c w" style="left:973px;top:330px;width:62px"></div>
<div class="c w" style="left:1037px;top:330px;width:14px"></div>
<div class="t" style="left:25px;top:330px;width:442px">/confirm.cfm?ccid=42732991&amp;order_id=16400&amp;sub_total=104.95&amp;shipOpt=&amp;email=</div>
<div class="t" style="left:471px;top:330px;width:407px">/store/Bridal-Satin-Sheets-Lilac.cfm?ID=629</div>
<div class="t" style="left:886px;top:328px;width:12px">$</div>
<div class="t num" style="left:901px;top:328px;width:63px">104.90</div>
<div class="rh" style="top:351px">9</div>
<div class="c w" style="left:23px;top:351px;width:444px"></div>
<div class="c w" style="left:469px;top:351px;width:409px"></div>
<div class="c w" style="left:880px;top:351px;width:91px"></div>
<div class="c w" style="left:973px;top:351px;width:62px"></div>
<div class="c w" style="left:1037px;top:351px;width:14px"></div>
<div class="t" style="left:25px;top:351px;width:442px">/confirm.cfm?ccid=14483153&amp;order_id=16376&amp;sub_total=82.95&amp;shipOpt=&amp;email=</div>
<div class="t" style="left:471px;top:351px;width:407px">/Store/CT-112-Morse-Code-Sheets.cfm?ID=1110</div>
<div class="t" style="left:886px;top:349px;width:12px">$</div>
<div class="t num" style="left:901px;top:349px;width:63px">82.95</div>
<div class="rh" style="top:372px">10</div>
<div class="c b" style="left:23px;top:372px;width:444px"></div>
<div class="c b" style="left:469px;top:372px;width:409px"></div>
<div class="c b" style="left:880px;top:372px;width:91px"></div>
<div class="c w" style="left:973px;top:372px;width:62px"></div>
<div class="c w" style="left:1037px;top:372px;width:14px"></div>
<div class="t" style="left:25px;top:372px;width:442px">/confirm.cfm?ccid=52246564&amp;order_id=16276&amp;sub_total=233.85&amp;shipOpt=&amp;email=</div>
<div class="t" style="left:471px;top:372px;width:407px">/store/CT-200-Turquoise-Sheets.cfm?ID=1132</div>
<div class="t" style="left:886px;top:370px;width:12px">$</div>
<div class="t num" style="left:901px;top:370px;width:63px">233.80</div>
<div class="rh" style="top:393px">11</div>
<div class="c w" style="left:23px;top:393px;width:444px"></div>
<div class="c w" style="left:469px;top:393px;width:409px"></div>
<div class="c w" style="left:880px;top:393px;width:91px"></div>
<div class="c w" style="left:973px;top:393px;width:62px"></div>
<div class="c w" style="left:1037px;top:393px;width:14px"></div>
<div class="t" style="left:25px;top:393px;width:442px">/confirm.cfm?ccid=62121093&amp;order_id=16096&amp;sub_total=109.9&amp;shipOpt=&amp;email=</div>
<div class="t" style="left:471px;top:393px;width:407px">/Store/display_results.cfm?category=102</div>
<div class="t" style="left:886px;top:391px;width:12px">$</div>
<div class="t num" style="left:901px;top:391px;width:63px">109.90</div>
<div class="rh" style="top:414px">12</div>
<div class="c b" style="left:23px;top:414px;width:444px"></div>
<div class="c b" style="left:469px;top:414px;width:409px"></div>
<div class="c b" style="left:880px;top:414px;width:91px"></div>
<div class="c w" style="left:973px;top:414px;width:62px"></div>
<div class="c w" style="left:1037px;top:414px;width:14px"></div>
<div class="t" style="left:25px;top:414px;width:442px">/confirm.cfm?ccid=20888432&amp;order_id=16285&amp;sub_total=34.95&amp;shipOpt=&amp;email=</div>
<div class="t" style="left:471px;top:414px;width:407px">/Store/display_results.cfm?category=15</div>
<div class="t" style="left:886px;top:412px;width:12px">$</div>
<div class="t num" style="left:901px;top:412px;width:63px">34.95</div>
<div class="rh" style="top:435px">13</div>
<div class="c w" style="left:23px;top:435px;width:444px"></div>
<div class="c w" style="left:469px;top:435px;width:409px"></div>
<div class="c w" style="left:880px;top:435px;width:91px"></div>
<div class="c w" style="left:973px;top:435px;width:62px"></div>
<div class="c w" style="left:1037px;top:435px;width:14px"></div>
<div class="t" style="left:25px;top:435px;width:442px">/confirm.cfm?ccid=26613020&amp;order_id=16293&amp;sub_total=34.95&amp;shipOpt=&amp;email=</div>
<div class="t" style="left:471px;top:435px;width:407px">/Store/display_results.cfm?category=15</div>
<div class="t" style="left:886px;top:433px;width:12px">$</div>
<div class="t num" style="left:901px;top:433px;width:63px">34.95</div>
<div class="rh" style="top:456px">14</div>
<div class="c b" style="left:23px;top:456px;width:444px"></div>
<div class="c b" style="left:469px;top:456px;width:409px"></div>
<div class="c b" style="left:880px;top:456px;width:91px"></div>
<div class="c w" style="left:973px;top:456px;width:62px"></div>
<div class="c w" style="left:1037px;top:456px;width:14px"></div>
<div class="t" style="left:25px;top:456px;width:442px">/confirm.cfm?ccid=40098451&amp;order_id=16343&amp;sub_total=14.95&amp;shipOpt=&amp;email=</div>
<div class="t" style="left:471px;top:456px;width:407px">/Store/display_results.cfm?category=15</div>
<div class="t" style="left:886px;top:454px;width:12px">$</div>
<div class="t num" style="left:901px;top:454px;width:63px">14.95</div>
<div class="rh" style="top:477px">15</div>
<div class="c w" style="left:23px;top:477px;width:444px"></div>
<div class="c w" style="left:469px;top:477px;width:409px"></div>
<div class="c w" style="left:880px;top:477px;width:91px"></div>
<div class="c w" style="left:973px;top:477px;width:62px"></div>
<div class="c w" style="left:1037px;top:477px;width:14px"></div>
<div class="t" style="left:25px;top:477px;width:442px">/confirm.cfm?ccid=13720711&amp;order_id=16120&amp;sub_total=599.75&amp;shipOpt=&amp;email=</div>
<div class="t" style="left:471px;top:477px;width:407px">/store/display_results.cfm?category=84</div>
<div class="t" style="left:886px;top:475px;width:12px">$</div>
<div class="t num" style="left:901px;top:475px;width:63px">599.70</div>
<div class="rh" style="top:498px">16</div>
<div class="c b" style="left:23px;top:498px;width:444px"></div>
<div class="c b" style="left:469px;top:498px;width:409px"></div>
<div class="c b" style="left:880px;top:498px;width:91px"></div>
<div class="c w" style="left:973px;top:498px;width:62px"></div>
<div class="c w" style="left:1037px;top:498px;width:14px"></div>
<div class="t" style="left:25px;top:498px;width:442px">/confirm.cfm?ccid=21818407&amp;order_id=16125&amp;sub_total=224.95&amp;shipOpt=&amp;email=</div>
<div class="t" style="left:471px;top:498px;width:407px">/store/display_results.cfm?category=84</div>
<div class="t" style="left:886px;top:496px;width:12px">$</div>
<div class="t num" style="left:901px;top:496px;width:63px">224.90</div>
<div class="rh" style="top:519px">17</div>
<div class="c w" style="left:23px;top:519px;width:444px"></div>
<div class="c w" style="left:469px;top:519px;width:409px"></div>
<div class="c w" style="left:880px;top:519px;width:91px"></div>
<div class="c w" style="left:973px;top:519px;width:62px"></div>
<div class="c w" style="left:1037px;top:519px;width:14px"></div>
<div class="t" style="left:25px;top:519px;width:442px">/confirm.cfm?ccid=38292404&amp;order_id=16244&amp;sub_total=389.9&amp;shipOpt=&amp;email=</div>
<div class="t" style="left:471px;top:519px;width:407px">/store/display_results.cfm?category=84</div>
<div class="t" style="left:886px;top:517px;width:12px">$</div>
<div class="t num" style="left:901px;top:517px;width:63px">389.90</div>
<div class="rh" style="top:540px">18</div>
<div class="c b" style="left:23px;top:540px;width:444px"></div>
<div class="c b" style="left:469px;top:540px;width:409px"></div>
<div class="c b" style="left:880px;top:540px;width:91px"></div>
<div class="c w" style="left:973px;top:540px;width:62px"></div>
<div class="c w" style="left:1037px;top:540px;width:14px"></div>
<div class="t" style="left:25px;top:540px;width:442px">/confirm.cfm?ccid=57407862&amp;order_id=16065&amp;sub_total=114.95&amp;shipOpt=&amp;email=</div>
<div class="t" style="left:471px;top:540px;width:407px">/Store/Egyptian-Cotton-Sheets-Attached-Cal-King-600TC-Egyptian-Cotton</div>
<div class="t" style="left:886px;top:538px;width:12px">$</div>
<div class="t num" style="left:901px;top:538px;width:63px">114.90</div>
<div class="rh" style="top:561px">19</div>
<div class="c w" style="left:23px;top:561px;width:444px"></div>
<div class="c w" style="left:469px;top:561px;width:409px"></div>
<div class="c w" style="left:880px;top:561px;width:91px"></div>
<div class="c w" style="left:973px;top:561px;width:62px"></div>
<div class="c w" style="left:1037px;top:561px;width:14px"></div>
<div class="t" style="left:25px;top:561px;width:442px">/confirm.cfm?ccid=62397728&amp;order_id=16083&amp;sub_total=114.95&amp;shipOpt=&amp;email=</div>
<div class="t" style="left:471px;top:561px;width:407px">/Store/Egyptian-Cotton-Sheets-Attached-Cal-King-600TC-Egyptian-Cotton</div>
<div class="t" style="left:886px;top:559px;width:12px">$</div>
<div class="t num" style="left:901px;top:559px;width:63px">114.90</div>
<div class="rh" style="top:582px">20</div>
<div class="c b" style="left:23px;top:582px;width:444px"></div>
<div class="c b" style="left:469px;top:582px;width:409px"></div>
<div class="c b" style="left:880px;top:582px;width:91px"></div>
<div class="c w" style="left:973px;top:582px;width:62px"></div>
<div class="c w" style="left:1037px;top:582px;width:14px"></div>
<div class="t" style="left:25px;top:582px;width:442px">/confirm.cfm?ccid=55959181&amp;order_id=16287&amp;sub_total=74.95&amp;shipOpt=&amp;email=</div>
<div class="t" style="left:471px;top:582px;width:407px">/Store/Flannel-Sheets-Sage-Convert-A-Fit.cfm?ID=892</div>
<div class="t" style="left:886px;top:580px;width:12px">$</div>
<div class="t num" style="left:901px;top:580px;width:63px">74.95</div>
<div class="rh" style="top:603px">21</div>
<div class="c w" style="left:23px;top:603px;width:444px"></div>
<div class="c w" style="left:469px;top:603px;width:409px"></div>
<div class="c w" style="left:880px;top:603px;width:91px"></div>
<div class="c w" style="left:973px;top:603px;width:62px"></div>
<div class="c w" style="left:1037px;top:603px;width:14px"></div>
<div class="t" style="left:25px;top:603px;width:442px">/confirm.cfm?ccid=86812657&amp;order_id=16334&amp;sub_total=79.95&amp;shipOpt=&amp;email=</div>
<div class="t" style="left:471px;top:603px;width:407px">/store/Flannel-W-Bed-Sheets-Priscilla-Flannel-Sheets.cfm?ID=1189</div>
<div class="t" style="left:886px;top:601px;width:12px">$</div>
<div class="t num" style="left:901px;top:601px;width:63px">79.95</div>
<div class="rh" style="top:624px">22</div>
<div class="c b" style="left:23px;top:624px;width:444px"></div>
<div class="c b" style="left:469px;top:624px;width:409px"></div>
<div class="c b" style="left:880px;top:624px;width:91px"></div>
<div class="c w" style="left:973px;top:624px;width:62px"></div>
<div class="c w" style="left:1037px;top:624px;width:14px"></div>
<div class="t" style="left:25px;top:624px;width:442px">/confirm.cfm?ccid=98993191&amp;order_id=16176&amp;sub_total=159.9&amp;shipOpt=&amp;email=</div>
<div class="t" style="left:471px;top:624px;width:407px">/store/Flannel-W-Bed-Sheets.cfm?ct=93</div>
<div class="t" style="left:886px;top:622px;width:12px">$</div>
<div class="t num" style="left:901px;top:622px;width:63px">159.90</div>
<div class="rh" style="top:645px">23</div>
<div class="c w" style="left:23px;top:645px;width:444px"></div>
<div class="c w" style="left:469px;top:645px;width:409px"></div>
<div class="c w" style="left:880px;top:645px;width:91px"></div>
<div class="c w" style="left:973px;top:645px;width:62px"></div>
<div class="c w" style="left:1037px;top:645px;width:14px"></div>
<div class="t" style="left:25px;top:645px;width:442px">/confirm.cfm?ccid=70793049&amp;order_id=16177&amp;sub_total=313.85&amp;shipOpt=&amp;email=</div>
<div class="t" style="left:471px;top:645px;width:407px">/Store/Hardside-Covers.cfm?ct=19</div>
<div class="t" style="left:886px;top:643px;width:12px">$</div>
<div class="t num" style="left:901px;top:643px;width:63px">313.80</div>
<div class="rh" style="top:666px">24</div>
<div class="c b" style="left:23px;top:666px;width:444px"></div>
<div class="c b" style="left:469px;top:666px;width:409px"></div>
<div class="c b" style="left:880px;top:666px;width:91px"></div>
<div class="c w" style="left:973px;top:666px;width:62px"></div>
<div class="c w" style="left:1037px;top:666px;width:14px"></div>
<div class="t" style="left:25px;top:666px;width:442px">/confirm.cfm?ccid=49936454&amp;order_id=16044&amp;sub_total=58.95&amp;shipOpt=&amp;email=</div>
<div class="t" style="left:471px;top:666px;width:407px">/store/Hardside-Heaters.cfm?ct=22</div>
<div class="t" style="left:886px;top:664px;width:12px">$</div>
<div class="t num" style="left:901px;top:664px;width:63px">58.95</div>
<div class="rh" style="top:687px">25</div>
<div class="c w" style="left:23px;top:687px;width:444px"></div>
<div class="c w" style="left:469px;top:687px;width:409px"></div>
<div class="c w" style="left:880px;top:687px;width:91px"></div>
<div class="c w" style="left:973px;top:687px;width:62px"></div>
<div class="c w" style="left:1037px;top:687px;width:14px"></div>
<div class="t" style="left:25px;top:687px;width:442px">/confirm.cfm?ccid=29051001&amp;order_id=16295&amp;sub_total=29.95&amp;shipOpt=&amp;email=</div>
<div class="t" style="left:471px;top:687px;width:407px">/Store/Hardside-Liners.cfm?ct=26</div>
<div class="t" style="left:886px;top:685px;width:12px">$</div>
<div class="t num" style="left:901px;top:685px;width:63px">29.95</div>
<div class="rh" style="top:708px">26</div>
<div class="c b" style="left:23px;top:708px;width:444px"></div>
<div class="c b" style="left:469px;top:708px;width:409px"></div>
<div class="c b" style="left:880px;top:708px;width:91px"></div>
<div class="c w" style="left:973px;top:708px;width:62px"></div>
<div class="c w" style="left:1037px;top:708px;width:14px"></div>
<div class="t" style="left:25px;top:708px;width:442px">/confirm.cfm?ccid=74169499&amp;order_id=16157&amp;sub_total=449.95&amp;shipOpt=&amp;email=</div>
<div class="t" style="left:471px;top:708px;width:407px">/store/LaJolla-Oak-Tri-View-Mirror.cfm?ID=869</div>
<div class="t" style="left:886px;top:706px;width:12px">$</div>
<div class="t num" style="left:901px;top:706px;width:63px">449.90</div>
<div class="rh" style="top:729px">27</div>
<div class="c w" style="left:23px;top:729px;width:444px"></div>
<div class="c w" style="left:469px;top:729px;width:409px"></div>
<div class="c w" style="left:880px;top:729px;width:91px"></div>
<div class="c w" style="left:973px;top:729px;width:62px"></div>
<div class="c w" style="left:1037px;top:729px;width:14px"></div>
<div class="t" style="left:25px;top:729px;width:442px">/confirm.cfm?ccid=60997797&amp;order_id=16064&amp;sub_total=769.95&amp;shipOpt=&amp;email=</div>
<div class="t" style="left:471px;top:729px;width:407px">/Store/Magnolia-Freestanding-Bookcase-EK.cfm?ID=908</div>
<div class="t" style="left:886px;top:727px;width:12px">$</div>
<div class="t num" style="left:901px;top:727px;width:63px">769.90</div>
<div class="rh" style="top:750px">28</div>
<div class="c b" style="left:23px;top:750px;width:444px"></div>
<div class="c b" style="left:469px;top:750px;width:409px"></div>
<div class="c b" style="left:880px;top:750px;width:91px"></div>
<div class="c w" style="left:973px;top:750px;width:62px"></div>
<div class="c w" style="left:1037px;top:750px;width:14px"></div>
<div class="t" style="left:25px;top:750px;width:442px">/confirm.cfm?ccid=29099661&amp;order_id=16349&amp;sub_total=58.95&amp;shipOpt=&amp;email=</div>
<div class="t" style="left:471px;top:750px;width:407px">/Store/Oak-Furniture.cfm?ct=50</div>
<div class="t" style="left:886px;top:748px;width:12px">$</div>
<div class="t num" style="left:901px;top:748px;width:63px">58.95</div>
<div class="rh" style="top:771px">29</div>
<div class="c w" style="left:23px;top:771px;width:444px"></div>
<div class="c w" style="left:469px;top:771px;width:409px"></div>
<div class="c w" style="left:880px;top:771px;width:91px"></div>
<div class="c w" style="left:973px;top:771px;width:62px"></div>
<div class="c w" style="left:1037px;top:771px;width:14px"></div>
<div class="t" style="left:25px;top:771px;width:442px">/confirm.cfm?ccid=72774406&amp;order_id=16356&amp;sub_total=112.9&amp;shipOpt=&amp;email=</div>
<div class="t" style="left:471px;top:771px;width:407px">/Store/Oak-Furniture.cfm?ct=50</div>
<div class="t" style="left:886px;top:769px;width:12px">$</div>
<div class="t num" style="left:901px;top:769px;width:63px">112.90</div>
<div class="rh" style="top:792px">30</div>
<div class="c b" style="left:23px;top:792px;width:444px"></div>
<div class="c b" style="left:469px;top:792px;width:409px"></div>
<div class="c b" style="left:880px;top:792px;width:91px"></div>
<div class="c w" style="left:973px;top:792px;width:62px"></div>
<div class="c w" style="left:1037px;top:792px;width:14px"></div>
<div class="t" style="left:25px;top:792px;width:442px">/confirm.cfm?ccid=16375952&amp;order_id=16386&amp;sub_total=214.85&amp;shipOpt=&amp;email=</div>
<div class="t" style="left:471px;top:792px;width:407px">/Store/Oak-Waterbeds,-Walls-&amp;-Frames.cfm?ct=46</div>
<div class="t" style="left:886px;top:790px;width:12px">$</div>
<div class="t num" style="left:901px;top:790px;width:63px">214.80</div>
</body></html>
